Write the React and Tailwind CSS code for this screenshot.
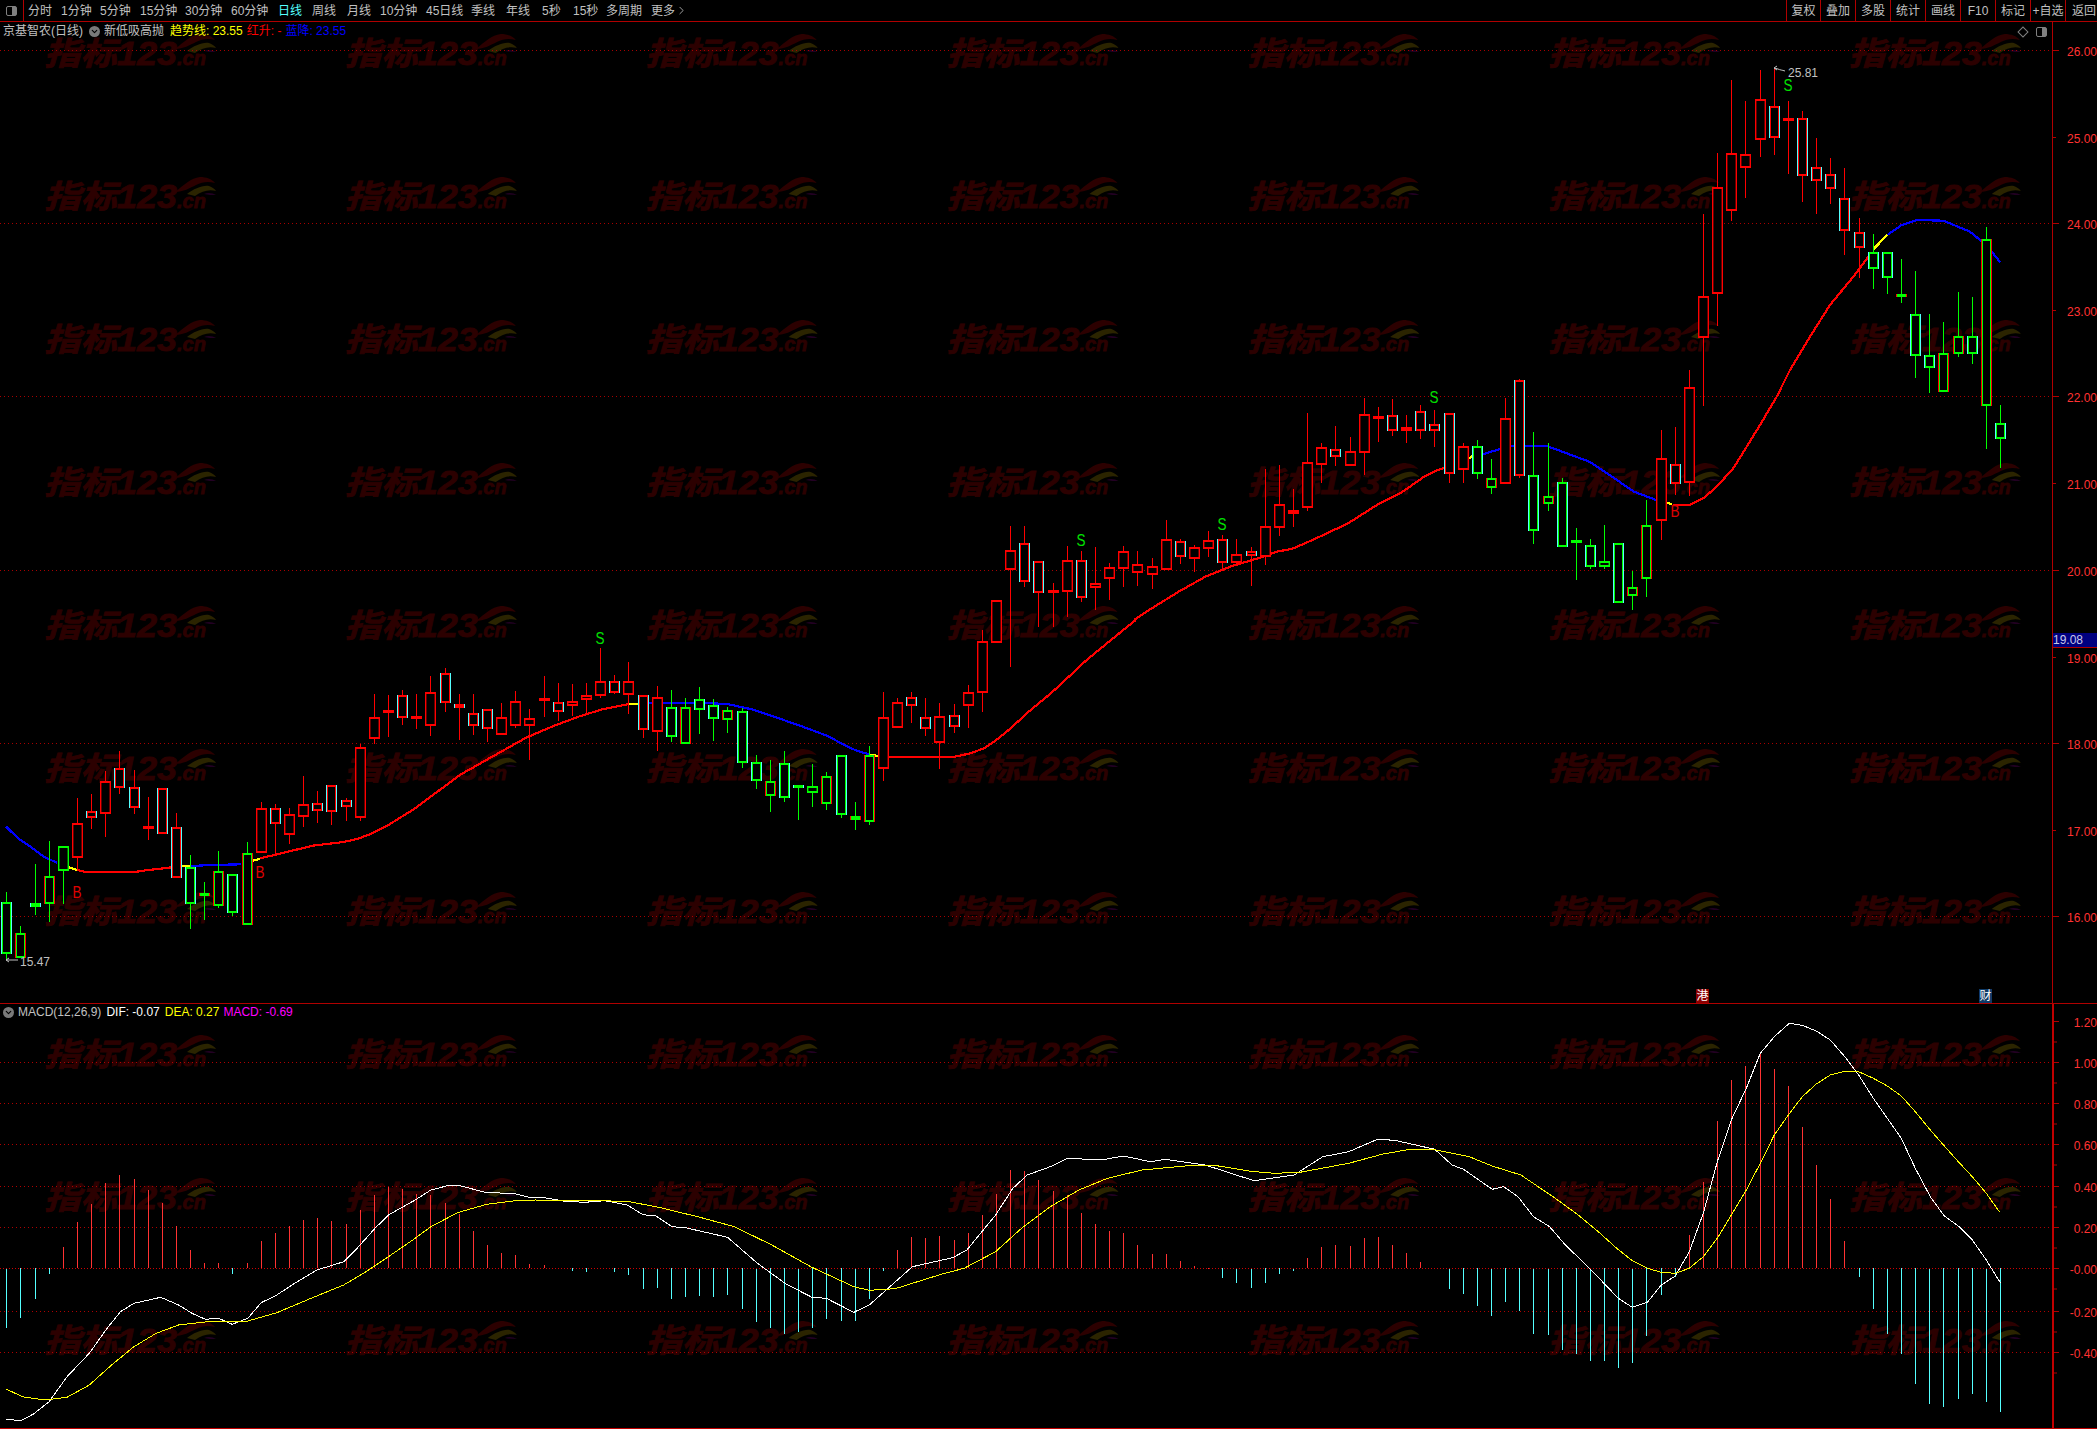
import { ChevronDown, ChevronRight } from "lucide-react";

const RED = "#ff0000";
const GREEN = "#00ff00";
const CYAN = "#54ffff";
const AXIS = "#b00000";

// widths keep each label on its own spot, the gaps in the toolbar are not even
const periods = [
  ["分时", "w-[33px]"], ["1分钟", "w-[39px]"], ["5分钟", "w-[40px]"], ["15分钟", "w-[45px]"], ["30分钟", "w-[46px]"],
  ["60分钟", "w-[47px]"], ["日线", "w-[34px]"], ["周线", "w-[35px]"], ["月线", "w-[33px]"], ["10分钟", "w-[46px]"],
  ["45日线", "w-[45px]"], ["季线", "w-[35px]"], ["年线", "w-[36px]"], ["5秒", "w-[31px]"], ["15秒", "w-[33px]"], ["多周期", "w-[45px]"],
];
const tools = ["复权", "叠加", "多股", "统计", "画线", "F10", "标记", "+自选"];

// candles: hi, body top, body bottom, lo, type. y values read off the crops, so each block has its own offset
const candleBlocks = [
  [650, [
    [727,757,910,930,"gc"],[828,850,920,925,"gr"],[642,760,769,795,"gc"],[574,679,758,815,"gr"],[587,589,659,762,"g"],
    [445,520,620,660,"r"],[432,484,502,537,"rc"],[363,394,488,560,"r"],[303,355,412,431,"rc"],[360,412,470,491,"rc"],
    [441,529,531,570,"r"],[415,415,548,550,"rc"],[490,532,680,682,"rc"],[616,652,758,836,"gc"],[697,730,736,810,"gr"],
    [603,664,765,774,"gr"],[672,673,785,797,"gc"],[576,610,821,821,"gr"],[457,475,605,605,"r"],[462,475,520,613,"rc"],
    [475,493,551,582,"r"],[378,463,497,531,"r"],[423,460,479,519,"rc"],[406,406,484,525,"rc"],[445,451,469,513,"rc"],
    [281,292,500,513,"r"],[132,202,263,281,"r"],[136,179,182,261,"r"],[120,136,202,225,"rc"],[132,197,200,237,"r"],
    [78,127,224,258,"r"],[54,70,157,186,"rc"],[132,163,170,270,"rc"],[132,189,226,255,"rc"],[178,178,235,277,"rc"],
    [159,202,251,251,"r"],[123,154,224,234,"r"],[178,205,224,330,"r"],[78,145,148,202,"r"],[98,157,184,214,"rc"],
    [102,152,164,198,"r"],[98,136,146,188,"r"],[-6,94,136,144,"r"],[75,94,127,131,"rc"],[36,94,133,192,"r"],
    [136,136,238,264,"rc"],[108,142,242,303,"r"],[120,172,259,276,"gc"],[144,172,278,282,"gr"],
  ]],
  [620, [
    [202,238,268,342,"gc"],[237,256,295,362,"gc"],[261,271,296,339,"gr"],[265,274,427,443,"gc"],[405,427,481,507,"gc"],
    [420,484,524,575,"gr"],[393,430,531,545,"gc"],[496,496,502,600,"gc"],[432,499,517,560,"g"],[456,469,550,570,"gr"],
    [406,406,583,593,"gc"],[546,589,598,630,"gr"],[378,406,602,614,"gr"],[216,292,445,483,"r"],[235,247,320,320,"r"],
    [216,232,254,308,"rc"],[234,292,325,348,"rc"],[250,289,365,447,"r"],[252,286,319,339,"rc"],[196,217,254,324,"r"],
    [30,64,217,275,"r"],[-60,-60,65,65,"r"],
  ]],
  [360, [
    [498,571,628,920,"r"],[498,550,664,680,"rc"],[603,604,697,800,"rc"],[670,691,697,800,"r"],[558,601,692,772,"r"],
    [573,601,712,725,"rc"],[562,670,680,750,"r"],[610,622,653,720,"r"],[558,574,623,682,"r"],[573,613,637,678,"r"],
    [594,619,641,688,"r"],[480,538,626,630,"r"],[538,544,589,612,"rc"],[556,562,593,635,"r"],[514,541,563,592,"r"],
    [525,538,606,628,"rc"],[537,583,607,618,"r"],[560,574,585,678,"rc"],[327,499,587,615,"r"],[315,433,500,527,"r"],
    [387,451,460,502,"r"],[158,307,440,452,"r"],[250,262,311,370,"r"],[197,268,288,318,"rc"],[231,274,316,316,"r"],
    [113,163,275,345,"r"],[140,167,170,246,"r"],[117,166,211,227,"rc"],[165,202,211,249,"r"],[135,154,211,238,"rc"],
    [150,193,210,261,"rc"],[159,160,340,370,"rc"],[250,259,326,369,"r"],[240,259,340,357,"gc"],[297,355,380,402,"gr"],
    [113,175,368,368,"r"],[57,61,344,355,"rc"],[216,346,511,552,"gc"],[249,409,428,453,"gr"],[355,367,559,559,"gc"],
    [504,541,544,660,"g"],[537,556,619,627,"gc"],[496,604,619,627,"g"],[550,550,727,730,"gc"],[633,682,704,750,"gr"],
    [420,496,653,710,"gr"],[210,295,479,540,"r"],[202,313,370,405,"rc"],
  ]],
  [50, [
    [960,1012,1297,1337,"r"],[492,739,862,1068,"r"],[310,412,728,828,"r"],[90,310,479,513,"r"],[153,313,350,443,"r"],
    [60,148,266,321,"r"],[55,169,262,315,"rc"],[153,204,206,372,"r"],[183,204,376,455,"rc"],[264,352,391,491,"rc"],
    [324,373,415,461,"rc"],[354,445,541,614,"rc"],[504,547,592,683,"rc"],[552,607,655,716,"gc"],[607,607,682,731,"gc"],
    [628,733,736,758,"gr"],[664,793,916,983,"gc"],[792,916,952,1028,"gc"],[816,910,1022,1022,"gr"],[727,859,910,920,"gr"],
    [741,859,910,941,"gc"],[532,568,1066,1196,"gr"],[1066,1120,1165,1253,"gc"],
  ]],
];

const candles = candleBlocks.flatMap(([off, rows]) =>
  rows.map(([hi, top, bot, lo, type]) => ({
    hi: off + hi / 3,
    top: off + top / 3,
    bot: off + bot / 3,
    lo: off + lo / 3,
    type,
  }))
);

const candleX = (i) => Math.round(6.25 + 14.14 * i);

// macd bar ends, same idea
const barBlocks = [
  [990, [1013,983,927,852,771,696,642,578,555,567,600,639,708,780,819,819,852,819,753,729,708,690,684,693,702,660,615,591,597,612,615,639,672,723,765,789,795,822,825,838,843,846,836,846,855,897,894,927,921,918]],
  [1100, [590,585,627,665,684,702,695,684,657,663,663,597,512,450,411,414,408,420,400,345,282,210,213,240,273,285,339,372,393,399,435,462,462,483,498,503,533,549,564,549,522,513,475,441,435,438,414,411,435,459,486,507,567,582,618,648,606,633,702,705,750,762,782]],
  [980, [1142,1163,1148,1067,945,890,765,606,423,300,258,220,267,318,441,555,657,783,890,987,1062,1122,1212,1272,1281,1257,1242,1266,1296]],
];
const bars = barBlocks.flatMap(([off, rows]) => rows.map((v) => off + v / 3));

const a = ([x, y]) => [x / 2.24, 650 + y / 3];
const b = ([x, y]) => [600 + x / 2.24, 620 + y / 3];
const c = ([x, y]) => [1000 + x / 2.24, 360 + y / 3];
const d = ([x, y]) => [1600 + x / 3, 50 + y / 3];
const m1 = ([x, y]) => [x / 2.24, 990 + y / 3];
const m2 = ([x, y]) => [700 + x / 1.742, 1100 + y / 3];
const m3 = ([x, y]) => [1600 + x / 3, 980 + y / 3];

const BLUE = "#0000ff";
const YEL = "#ffff00";
const trend = [
  [BLUE, a, [[14,530],[40,565],[70,592],[100,622],[128,638]]],
  [YEL, a, [[150,650],[172,660]]],
  [RED, a, [[172,660],[195,667],[298,667],[320,662],[385,652]]],
  [YEL, a, [[405,648],[427,648]]],
  [BLUE, a, [[427,648],[475,645],[540,643]]],
  [YEL, a, [[562,633],[583,627]]],
  [RED, a, [[583,625],[640,607],[700,587],[770,576],[800,567],[830,552],[870,525],[930,475],[970,435],[1030,375],[1100,322],[1180,262],[1240,228],[1300,198],[1350,178],[1408,162]]],
  [YEL, b, [[65,252],[85,252]]],
  [BLUE, b, [[105,248],[215,248],[285,252],[340,268],[400,295],[450,318],[510,348],[550,377],[575,392],[603,403]]],
  [YEL, b, [[603,404],[625,408]]],
  [RED, b, [[645,410],[795,410],[830,400],[860,385],[888,360],[920,325],[960,275],[1010,220],[1050,170],[1090,120],[1140,65],[1200,0]]],
  [RED, c, [[300,780],[340,745],[400,695],[460,650],[520,618],[590,590],[620,575],[655,566],[700,540],[780,490],[850,430],[900,397],[950,350],[980,330],[1020,313]]],
  [YEL, c, [[1048,298],[1058,288]]],
  [BLUE, c, [[1082,283],[1120,267]]],
  [BLUE, c, [[1145,258],[1225,258],[1320,305],[1360,340],[1420,395],[1470,420]]],
  [YEL, d, [[198,1358],[215,1362]]],
  [RED, d, [[220,1365],[268,1365],[310,1345],[350,1310],[400,1255],[440,1190],[480,1125],[530,1040],[570,960],[630,860],[690,765],[760,680],[805,620]]],
  [YEL, d, [[820,598],[862,555]]],
  [BLUE, d, [[862,555],[905,525],[950,510],[1030,512],[1110,545],[1140,570],[1175,605],[1201,637]]],
];

const dif = [
  ...[[14,1288],[47,1292],[75,1272],[110,1235],[150,1160],[200,1090],[240,1015],[270,965],[300,940],[360,922],[400,945],[430,970],[460,988],[490,985],[520,1003],[555,985],[585,938],[620,915],[660,880],[710,840],[770,815],[800,775],[840,715],[870,675],[930,630],[965,600],[1000,588],[1030,587],[1090,608],[1150,610],[1185,622],[1220,623],[1265,634],[1310,637],[1355,632],[1405,645],[1440,674],[1470,678],[1505,710],[1535,713],[1568,723]].map(m1),
  ...[[48,412],[100,490],[150,552],[195,592],[220,595],[268,637],[295,615],[370,500],[440,473],[465,450],[515,345],[545,265],[570,225],[615,197],[640,175],[700,180],[737,168],[785,185],[810,178],[880,195],[965,242],[1035,225],[1085,170],[1130,155],[1180,118],[1210,121],[1280,148],[1310,195],[1330,208],[1380,268],[1400,260],[1425,290],[1452,350],[1480,380],[1505,430],[1552,510],[1568,538]].map(m2),
  ...[[55,955],[97,982],[142,967],[184,915],[226,888],[268,815],[310,700],[352,545],[394,420],[439,325],[481,220],[523,170],[568,130],[607,136],[649,153],[691,180],[736,232],[778,288],[820,355],[862,415],[904,475],[946,565],[991,650],[1033,708],[1075,738],[1117,780],[1159,840],[1201,908]].map(m3),
];

const dea = [
  ...[[14,1197],[50,1220],[100,1230],[150,1222],[200,1185],[250,1125],[300,1070],[350,1030],[400,1005],[460,996],[520,995],[555,993],[620,968],[700,923],[770,885],[820,845],[870,800],[930,745],[965,710],[1025,668],[1090,643],[1150,633],[1200,630],[1260,632],[1350,632],[1410,635],[1480,653],[1568,682]].map(m1),
  ...[[60,380],[125,435],[195,502],[268,560],[295,571],[340,566],[420,523],[460,505],[515,455],[560,385],[610,320],[660,270],[710,235],[770,210],[850,197],[900,197],[960,214],[1000,220],[1045,217],[1130,190],[1190,162],[1230,150],[1280,149],[1340,170],[1380,198],[1430,225],[1490,295],[1530,345],[1568,400]].map(m2),
  ...[[50,805],[97,842],[142,865],[184,877],[226,880],[268,865],[310,830],[352,775],[394,705],[439,630],[481,550],[523,465],[565,405],[607,350],[649,312],[691,285],[736,274],[778,276],[820,295],[862,318],[904,348],[946,395],[991,450],[1033,498],[1075,545],[1117,590],[1159,640],[1198,695]].map(m3),
];

const toPoints = (pts) => pts.map(([x, y]) => `${x.toFixed(1)},${y.toFixed(1)}`).join(" ");

const priceLabels = [["26.00",50],["25.00",137],["24.00",223],["23.00",310],["22.00",396],["21.00",483],["20.00",570],["19.00",657],["18.00",743],["17.00",830],["16.00",916]];
const macdLabels = [["1.20",1021],["1.00",1062],["0.80",1103],["0.60",1144],["0.40",1186],["0.20",1227],["-0.00",1268],["-0.20",1311],["-0.40",1352]];

const sans = "'Liberation Sans','Noto Sans CJK SC',sans-serif";

const Watermark = ({ x, y }) => (
  <g transform={`translate(${x} ${y})`}>
    <g fill="#2c0000" stroke="#2c0000" strokeWidth="0.8" fontStyle="italic" fontWeight="700">
      <text y="26" fontSize="32" textLength="73" lengthAdjust="spacingAndGlyphs" fontFamily="'Noto Sans CJK SC',sans-serif">指标</text>
      <text x="73" y="26" fontSize="34" textLength="60" lengthAdjust="spacingAndGlyphs" fontFamily="'Liberation Sans',sans-serif">123</text>
      <text x="133" y="26" fontSize="20" fontFamily="'Liberation Sans',sans-serif">.cn</text>
    </g>
    <path d="M131 10 C140 3 147 -4 156 -5 C162 -5 168 -3 171 1 C164 -1 158 0 152 3 C146 6 139 10 131 10 Z" fill="#2c0000" />
    <path d="M143 12 C150 7 158 3 165 4 C168 5 171 7 172 9 C165 7 158 9 151 14 Z" fill="#2b2400" />
    <path d="M160 12 C164 10 169 11 172 13 C168 13 164 13 160 12 Z" fill="#220022" />
  </g>
);

// rows 0-6 sit on the price panel, 7-9 on the macd panel
const Watermarks = ({ from, to }) => {
  const items = [];
  for (let r = from; r <= to; r++) {
    for (let k = 0; k < 7; k++) {
      items.push(<Watermark key={`${r}-${k}`} x={44 + 300.8 * k} y={39 + 143 * r} />);
    }
  }
  return items;
};

const Candle = ({ i, hi, top, bot, lo, type }) => {
  const x = candleX(i);
  const main = type[0] === "r" ? RED : GREEN;
  const edge = type[1] === "c" ? CYAN : type[1] === "r" ? RED : main;
  const t = Math.round(top);
  const h = Math.max(Math.round(bot) - t, 2);
  // plain candles have thinner sides than the two colour ones
  const inner = type.length === 1 ? 0.4 : 1;
  return (
    <g>
      <rect x={x} y={hi} width="1" height={Math.max(lo - hi, 1)} fill={main} />
      <rect x={x - 5} y={t} width="11" height={h} fill="#000" />
      <rect x={x - 5} y={t} width="1" height={h + 1} fill={edge} />
      <rect x={x + 5} y={t} width="1" height={h + 1} fill={edge} />
      <rect x={x - 4} y={t} width="1" height={h + 1} fill={main} opacity={inner} />
      <rect x={x + 4} y={t} width="1" height={h + 1} fill={main} opacity={inner} />
      <rect x={x - 4} y={t} width="9" height="2" fill={main} />
      <rect x={x - 4} y={t + h - 1} width="9" height="2" fill={main} />
    </g>
  );
};

const DotLine = ({ y, color = "#a80000" }) => (
  <line x1="0" x2="2052" y1={y + 0.5} y2={y + 0.5} stroke={color} strokeDasharray="1 3" />
);

const Marker = ({ x, y, color, children }) => (
  <text x={x} y={y} fill={color} fontSize="16" textAnchor="middle" fontFamily={sans} textLength="9" lengthAdjust="spacingAndGlyphs">
    {children}
  </text>
);

const PricePlot = () => (
  <svg width="2052" height="981" viewBox="0 22 2052 981" className="block shrink-0">
    <Watermarks from={0} to={6} />
    <g shapeRendering="crispEdges">
      {[50, 223, 396, 570, 743, 916].map((y) => <DotLine key={y} y={y} />)}
      {trend.map(([color, map, pts], i) => (
        <polyline key={i} points={toPoints(pts.map(map))} fill="none" stroke={color} strokeWidth="2.2" />
      ))}
      {candles.map((cd, i) => <Candle key={i} i={i} {...cd} />)}
    </g>
    <Marker x={600} y={644} color="#00e000">S</Marker>
    <Marker x={1081} y={546} color="#00e000">S</Marker>
    <Marker x={1222} y={530} color="#00e000">S</Marker>
    <Marker x={1434} y={403} color="#00e000">S</Marker>
    <Marker x={1788} y={91} color="#00e000">S</Marker>
    <Marker x={77} y={898} color="#e00000">B</Marker>
    <Marker x={260} y={878} color="#e00000">B</Marker>
    <Marker x={1675} y={517} color="#e00000">B</Marker>
    {/* high / low tags */}
    <path d="M1785 71 C1782 70 1780 70 1778 69 L1774 68 M1774 68 L1777 66 M1774 68 L1777 70" stroke="#c0c0c0" fill="none" />
    <text x="1788" y="77" fill="#c0c0c0" fontSize="12" fontFamily={sans}>25.81</text>
    <path d="M18 960 L6 960 M6 960 L9 958 M6 960 L9 962" stroke="#c0c0c0" fill="none" />
    <text x="20" y="966" fill="#c0c0c0" fontSize="12" fontFamily={sans}>15.47</text>
  </svg>
);

const PriceAxis = () => (
  <svg width="45" height="981" viewBox="2052 22 45 981" className="block shrink-0">
    <line x1="2052.5" x2="2052.5" y1="22" y2="1003" stroke={AXIS} />
    {priceLabels.map(([label, y], i) => (
      <g key={label}>
        <line x1="2052" x2={i % 2 === 0 ? 2059 : 2056} y1={y + 0.5} y2={y + 0.5} stroke={AXIS} />
        <text x="2097" y={y + 5.5} textAnchor="end" fill="#ff3232" fontSize="12" fontFamily={sans}>{label}</text>
      </g>
    ))}
  </svg>
);

const MacdPlot = () => (
  <svg width="2052" height="424" viewBox="0 1004 2052 424" className="block shrink-0">
    <Watermarks from={7} to={9} />
    <g shapeRendering="crispEdges">
      {[1062, 1103, 1144, 1186, 1227, 1311, 1352].map((y) => <DotLine key={y} y={y} color="#b00000" />)}
      {bars.map((end, i) => (
        <rect
          key={i}
          x={candleX(i)}
          y={Math.min(end, 1268)}
          width="1"
          height={Math.max(Math.abs(end - 1268), 1)}
          fill={end < 1268 ? "#ff3232" : CYAN}
        />
      ))}
      <line x1="0" x2="2052" y1="1268.5" y2="1268.5" stroke="#d00000" strokeDasharray="1 2" />
      <polyline points={toPoints(dif)} fill="none" stroke="#ffffff" strokeWidth="1" />
      <polyline points={toPoints(dea)} fill="none" stroke={YEL} strokeWidth="1" />
    </g>
  </svg>
);

const MacdAxis = () => (
  <svg width="45" height="424" viewBox="2052 1004 45 424" className="block shrink-0">
    <line x1="2053" x2="2053" y1="1004" y2="1428" stroke="#c00000" strokeWidth="2" />
    {macdLabels.map(([label, y]) => (
      <g key={label}>
        <line x1="2054" x2="2059" y1={y + 0.5} y2={y + 0.5} stroke={AXIS} />
        <line x1="2054" x2="2057" y1={y + 21} y2={y + 21} stroke={AXIS} />
        <text x="2097" y={y + 5.5} textAnchor="end" fill="#ff3232" fontSize="12" fontFamily={sans}>{label}</text>
      </g>
    ))}
  </svg>
);

const WindowIcon = () => (
  <div className="w-[11px] h-[10px] rounded-[2px] border border-[#808080] bg-black flex justify-end">
    <div className="w-[4px] bg-[#808080]" />
  </div>
);

const RoundIcon = () => (
  <span className="w-[11px] h-[11px] rounded-full bg-[#7a7a7a] flex items-center justify-center shrink-0">
    <ChevronDown size={9} strokeWidth={3} color="#000" />
  </span>
);

const Toolbar = () => (
  <div className="h-[22px] shrink-0 flex items-stretch border-b border-[#b00000] text-[12px] leading-none text-[#c0c0c0]">
    <div className="w-[24px] shrink-0 flex items-center justify-center border-r border-[#b00000]">
      <WindowIcon />
    </div>
    <div className="flex items-center pl-[4px]">
      {periods.map(([p, w]) => (
        <span key={p} className={`${w} ${p === "日线" ? "text-[#54ffff]" : ""}`}>{p}</span>
      ))}
      <span className="flex items-center">
        更多
        <ChevronRight size={13} strokeWidth={1.5} />
      </span>
    </div>
    <div className="ml-auto flex">
      {tools.map((t, i) => (
        <div key={t} className={`${i === 0 ? "w-[34px]" : "w-[35px]"} flex items-center justify-center border-l border-[#b00000]`}>
          {t}
        </div>
      ))}
      <div className="w-[32px] flex items-center pl-[6px] border-l border-[#b00000]">返回</div>
    </div>
  </div>
);

export default function App() {
  return (
    <div className="w-[2097px] h-[1429px] bg-black overflow-hidden flex flex-col font-['Liberation_Sans','Noto_Sans_CJK_SC',sans-serif]">
      <Toolbar />

      {/* price panel */}
      <div className="relative flex shrink-0 h-[981px]">
        <PricePlot />
        <PriceAxis />
        <div className="absolute left-[3px] top-0 h-[18px] flex items-center text-[12px] leading-none text-[#c0c0c0]">
          <span>京基智农(日线)</span>
          <span className="ml-[6px]"><RoundIcon /></span>
          <span className="ml-[4px]">新低吸高抛</span>
          <span className="ml-[6px] text-[#ffff00]">趋势线: 23.55</span>
          <span className="ml-[4px] text-[#ff0000]">红升: -</span>
          <span className="ml-[4px] text-[#0000ff]">蓝降: 23.55</span>
        </div>
        <div className="absolute left-[2019px] top-[6px] w-[8px] h-[8px] rotate-45 border border-[#808080]" />
        <div className="absolute left-[2036px] top-[5px]">
          <WindowIcon />
        </div>
        <div className="absolute left-[2053px] top-[611px] w-[44px] h-[15px] bg-[#000080] border-b border-[#b00000] flex items-center text-[12px] leading-none text-[#c8c8e8]">
          19.08
        </div>
        <div className="absolute left-[1696px] top-[967px] w-[13px] h-[14px] bg-[#8b0000] flex items-center justify-center text-[12px] leading-none text-white">
          港
        </div>
        <div className="absolute left-[1979px] top-[967px] w-[13px] h-[14px] bg-[#0f3a66] flex items-center justify-center text-[12px] leading-none text-white">
          财
        </div>
      </div>

      {/* macd panel */}
      <div className="relative flex flex-1 border-t border-[#b00000]">
        <MacdPlot />
        <MacdAxis />
        <div className="absolute left-[3px] top-0 h-[16px] flex items-center text-[12px] leading-none text-[#c0c0c0]">
          <RoundIcon />
          <span className="ml-[4px]">MACD(12,26,9)</span>
          <span className="ml-[5px] text-white">DIF: -0.07</span>
          <span className="ml-[5px] text-[#ffff00]">DEA: 0.27</span>
          <span className="ml-[4px] text-[#ff00ff]">MACD: -0.69</span>
        </div>
      </div>
      <div className="h-[1px] shrink-0 bg-[#c00000]" />
    </div>
  );
}
